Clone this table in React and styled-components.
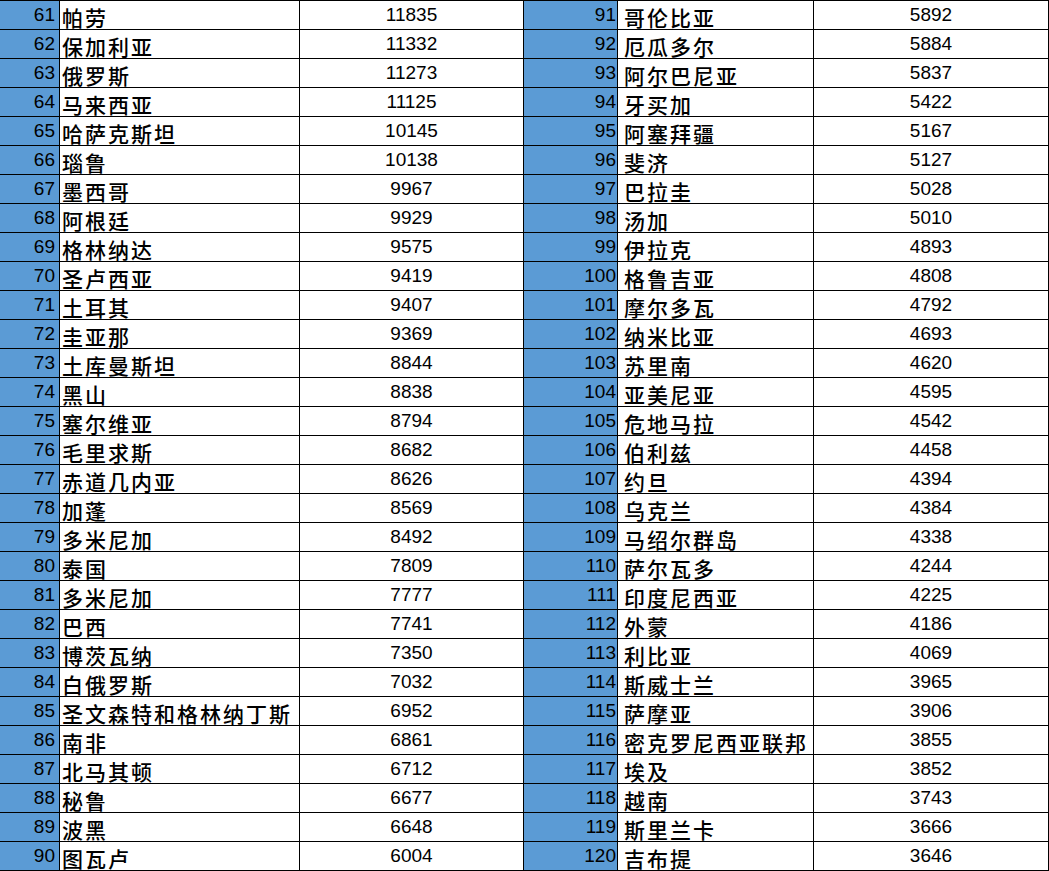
import React from 'react';
import styled, { createGlobalStyle } from 'styled-components';

const GlobalStyle = createGlobalStyle`
  html, body {
    margin: 0;
    padding: 0;
    background: #fff;
  }
`;

const Sheet = styled.div`
  display: grid;
  grid-template-columns: 59px 239px 223px 93px 195px 234px;
  grid-auto-rows: 28px;
  gap: 1px;
  width: 1049px;
  box-sizing: border-box;
  padding: 1px 1px 1px 0;
  background: #000;
`;

const IndexCell = styled.div`
  display: flex;
  align-items: center;
  justify-content: flex-end;
  padding: 0 ${p => p.$pad}px 1px 0;
  background: #5b9bd5;
  color: #000;
  font-family: "Liberation Sans", Arial, sans-serif;
  font-size: 19px;
  line-height: 1;
`;

const NameCell = styled.div`
  display: flex;
  align-items: center;
  padding: 4px 0 0 ${p => p.$pad}px;
  background: #fff;
  color: #000;
  font-family: "Noto Sans CJK SC", "Noto Sans", sans-serif;
  font-size: 21px;
  font-weight: 500;
  line-height: 1;
  letter-spacing: 2px;
  white-space: nowrap;
`;

const ValueCell = styled.div`
  display: flex;
  align-items: center;
  justify-content: center;
  padding-bottom: 1px;
  background: #fff;
  color: #000;
  font-family: "Liberation Sans", Arial, sans-serif;
  font-size: 19px;
  line-height: 1;
`;

const left = [
  ['帕劳', 11835], ['保加利亚', 11332], ['俄罗斯', 11273], ['马来西亚', 11125],
  ['哈萨克斯坦', 10145], ['瑙鲁', 10138], ['墨西哥', 9967], ['阿根廷', 9929],
  ['格林纳达', 9575], ['圣卢西亚', 9419], ['土耳其', 9407], ['圭亚那', 9369],
  ['土库曼斯坦', 8844], ['黑山', 8838], ['塞尔维亚', 8794], ['毛里求斯', 8682],
  ['赤道几内亚', 8626], ['加蓬', 8569], ['多米尼加', 8492], ['泰国', 7809],
  ['多米尼加', 7777], ['巴西', 7741], ['博茨瓦纳', 7350], ['白俄罗斯', 7032],
  ['圣文森特和格林纳丁斯', 6952], ['南非', 6861], ['北马其顿', 6712], ['秘鲁', 6677],
  ['波黑', 6648], ['图瓦卢', 6004],
];

const right = [
  ['哥伦比亚', 5892], ['厄瓜多尔', 5884], ['阿尔巴尼亚', 5837], ['牙买加', 5422],
  ['阿塞拜疆', 5167], ['斐济', 5127], ['巴拉圭', 5028], ['汤加', 5010],
  ['伊拉克', 4893], ['格鲁吉亚', 4808], ['摩尔多瓦', 4792], ['纳米比亚', 4693],
  ['苏里南', 4620], ['亚美尼亚', 4595], ['危地马拉', 4542], ['伯利兹', 4458],
  ['约旦', 4394], ['乌克兰', 4384], ['马绍尔群岛', 4338], ['萨尔瓦多', 4244],
  ['印度尼西亚', 4225], ['外蒙', 4186], ['利比亚', 4069], ['斯威士兰', 3965],
  ['萨摩亚', 3906], ['密克罗尼西亚联邦', 3855], ['埃及', 3852], ['越南', 3743],
  ['斯里兰卡', 3666], ['吉布提', 3646],
];

const App = () => (
  <>
    <GlobalStyle />
    <Sheet>
      {left.map(([name, value], i) => (
        <React.Fragment key={i}>
          <IndexCell $pad={4}>{61 + i}</IndexCell>
          <NameCell $pad={2}>{name}</NameCell>
          <ValueCell>{value}</ValueCell>
          <IndexCell $pad={1}>{91 + i}</IndexCell>
          <NameCell $pad={6}>{right[i][0]}</NameCell>
          <ValueCell>{right[i][1]}</ValueCell>
        </React.Fragment>
      ))}
    </Sheet>
  </>
);

export default App;
